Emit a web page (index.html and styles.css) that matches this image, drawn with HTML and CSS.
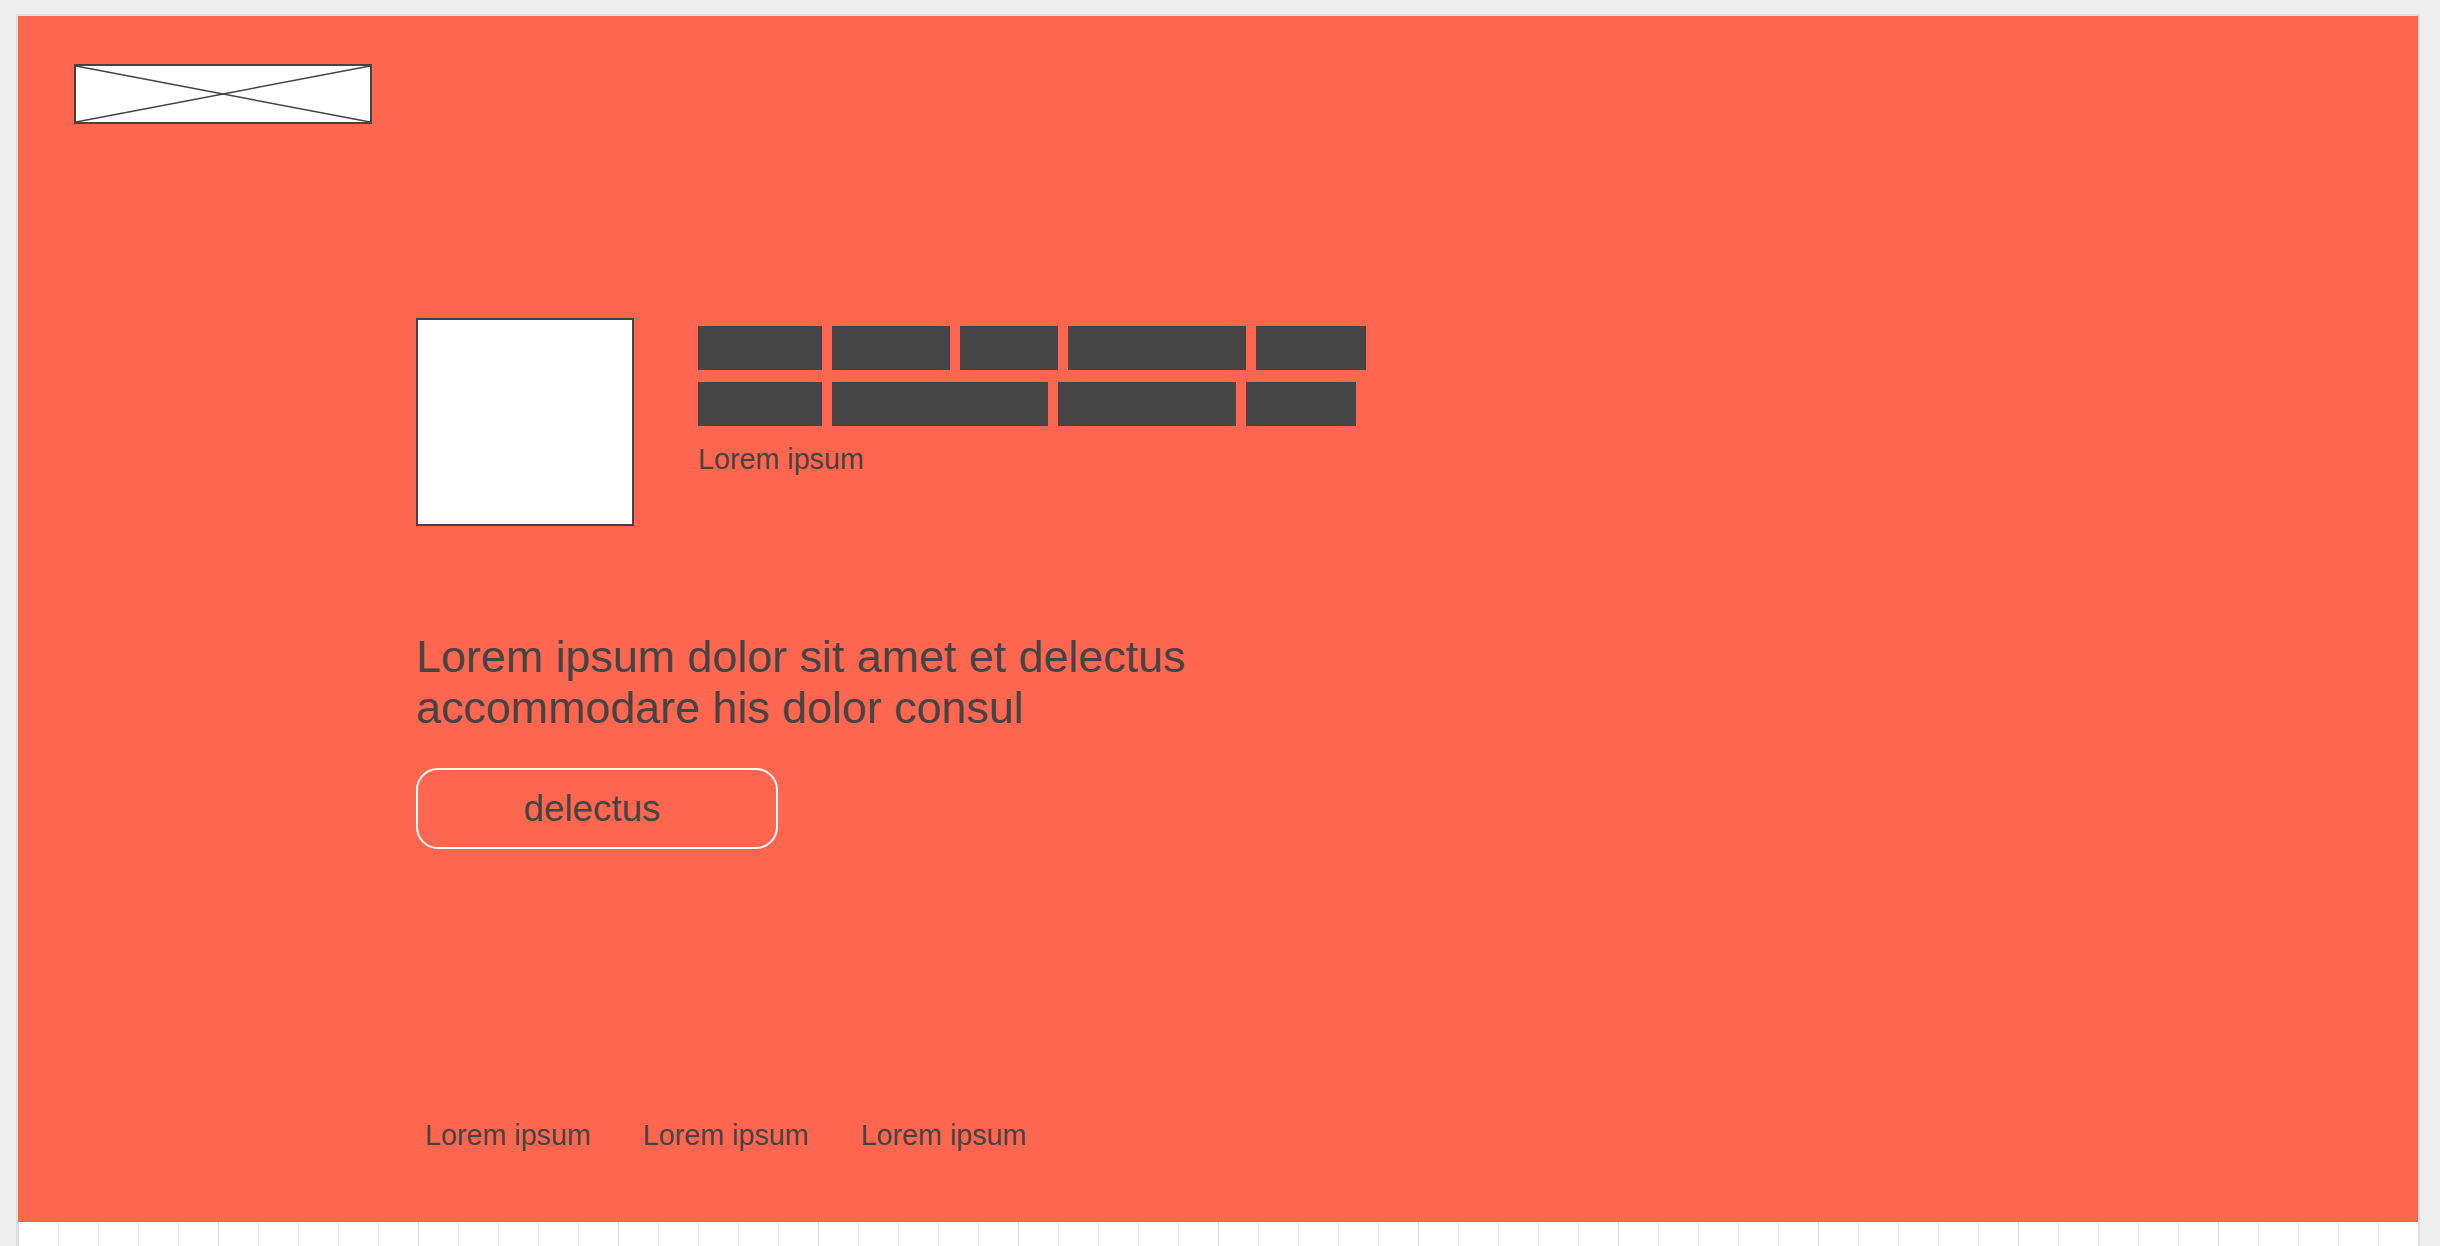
FILE: index.html
```html
<!DOCTYPE html>
<html lang="en">
<head>
<meta charset="utf-8">
<title>Wireframe</title>
<link rel="stylesheet" href="styles.css">
</head>
<body>
<div class="canvas">
  <section class="hero">
    <div class="logo">
      <svg width="298" height="60" viewBox="0 0 298 60" aria-hidden="true">
        <rect x="1" y="1" width="296" height="58" fill="#fff" stroke="#444" stroke-width="2"/>
        <line x1="2" y1="2" x2="296" y2="58" stroke="#444" stroke-width="1.5"/>
        <line x1="2" y1="58" x2="296" y2="2" stroke="#444" stroke-width="1.5"/>
      </svg>
    </div>
    <div class="main">
      <div class="profile">
        <div class="avatar"></div>
        <div class="info">
          <div class="bars">
            <span class="bar" style="width:124px"></span>
            <span class="bar" style="width:118px"></span>
            <span class="bar" style="width:98px"></span>
            <span class="bar" style="width:178px"></span>
            <span class="bar" style="width:110px"></span>
          </div>
          <div class="bars">
            <span class="bar" style="width:124px"></span>
            <span class="bar" style="width:216px"></span>
            <span class="bar" style="width:178px"></span>
            <span class="bar" style="width:110px"></span>
          </div>
          <p class="label">Lorem ipsum</p>
        </div>
      </div>
      <h1 class="headline">Lorem ipsum dolor sit amet et delectus<br>accommodare his dolor consul</h1>
      <a class="button">delectus</a>
    </div>
    <nav class="footer">
      <a class="link">Lorem ipsum</a>
      <a class="link">Lorem ipsum</a>
      <a class="link">Lorem ipsum</a>
    </nav>
  </section>
</div>
</body>
</html>
```

FILE: styles.css
```css
html, body {
  margin: 0;
  padding: 0;
}

body {
  background: #eeeeee;
  font-family: "Liberation Sans", Arial, sans-serif;
  color: #444444;
  height: 1246px;
  overflow: hidden;
}

.canvas {
  margin: 14px 0 0 16px;
  width: 2400px;
  height: 1230px;
  border: 2px solid #dedede;
  border-bottom: none;
  background-color: #ffffff;
  background-image:
    linear-gradient(to right, #dddddd 1px, transparent 1px),
    linear-gradient(to right, #ebebeb 1px, transparent 1px);
  background-size: 200px 100%, 40px 100%;
  background-position: 0 0, 0 0;
}

.hero {
  height: 1206px;
  box-sizing: border-box;
  background: #ff6650;
  padding: 48px 0 71px 56px;
  display: flex;
  flex-direction: column;
  align-items: flex-start;
}

.logo {
  width: 298px;
  height: 60px;
}

.logo svg {
  display: block;
}

.main {
  margin: 194px 0 0 342px;
  display: flex;
  flex-direction: column;
  align-items: flex-start;
}

.profile {
  display: flex;
  align-items: flex-start;
  gap: 64px;
}

.avatar {
  width: 218px;
  height: 208px;
  box-sizing: border-box;
  background: #ffffff;
  border: 2px solid #444444;
}

.info {
  padding-top: 8px;
  display: flex;
  flex-direction: column;
  gap: 12px;
}

.bars {
  display: flex;
  gap: 10px;
}

.bar {
  display: block;
  height: 44px;
  background: #454545;
}

.label {
  margin: 5px 0 0;
  font-size: 28.7px;
  line-height: 32px;
}

.headline {
  margin: 105px 0 0;
  font-size: 44.8px;
  line-height: 51px;
  font-weight: normal;
}

.button {
  margin-top: 35px;
  width: 362px;
  height: 81px;
  box-sizing: border-box;
  border: 2px solid #ffffff;
  border-radius: 22px;
  display: flex;
  align-items: center;
  justify-content: center;
  padding-right: 10px;
  font-size: 36.8px;
  color: #444444;
}

.footer {
  margin: auto 0 0 351px;
  display: flex;
  gap: 52px;
}

.link {
  font-size: 28.7px;
  line-height: 32px;
  color: #444444;
}
```
